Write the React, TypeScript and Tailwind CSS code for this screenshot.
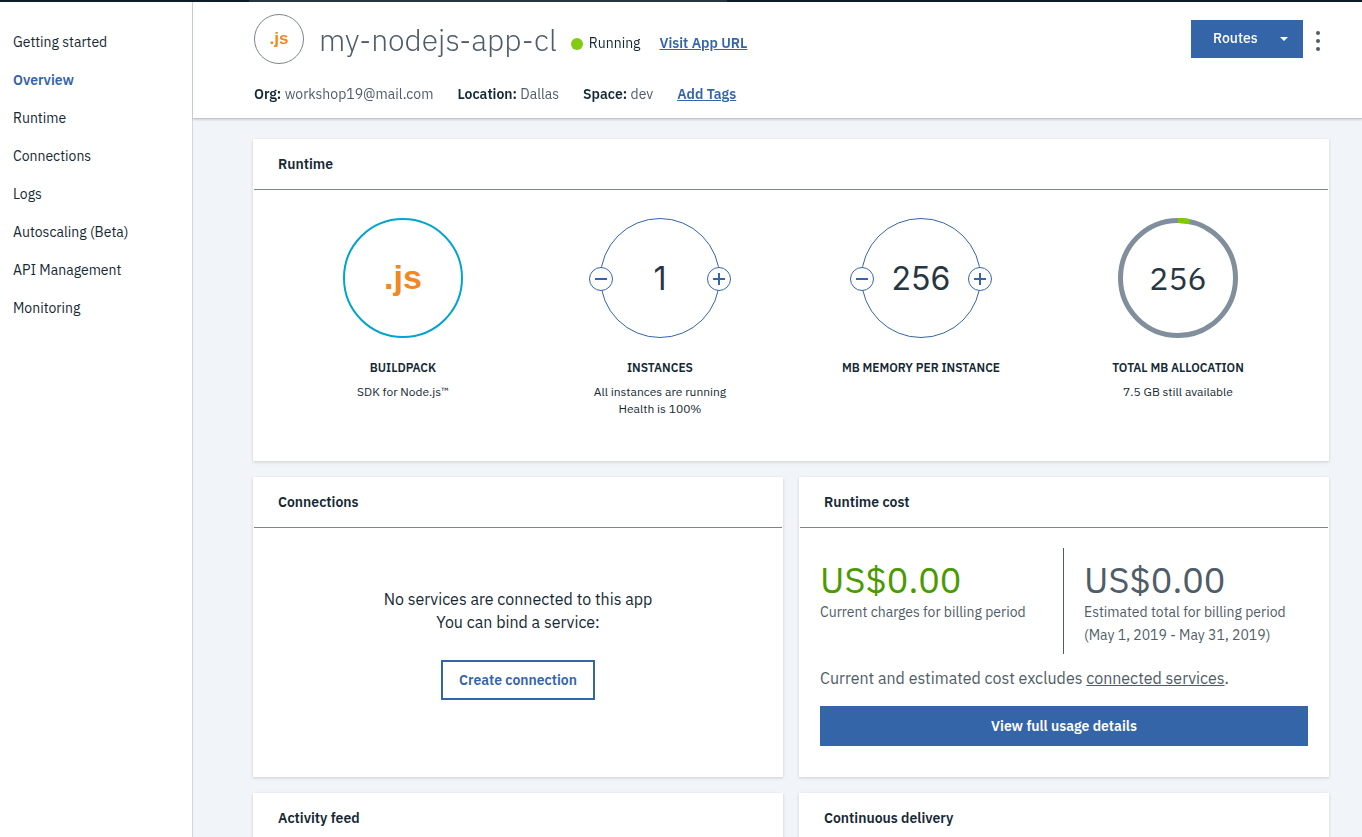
import type { ReactNode } from "react";

const navItems = [
  "Getting started",
  "Overview",
  "Runtime",
  "Connections",
  "Logs",
  "Autoscaling (Beta)",
  "API Management",
  "Monitoring",
];

function Card({ title, className = "", children }: { title: string; className?: string; children?: ReactNode }) {
  return (
    <section className={`flex flex-col bg-white shadow-[0_1px_3px_rgba(0,0,0,0.16)] ${className}`}>
      <h2 className="mx-px border-b border-[#79868f] pl-6 text-sm leading-[50px] font-semibold">{title}</h2>
      {children}
    </section>
  );
}

function Metric({ label, lines = [], children }: { label: string; lines?: string[]; children: ReactNode }) {
  return (
    <div className="flex flex-col items-center text-center text-xs">
      {children}
      <h3 className="mt-[22px] leading-4 font-semibold">{label}</h3>
      <div className="mt-[7px] leading-[17px]">
        {lines.map((line) => (
          <p key={line}>{line}</p>
        ))}
      </div>
    </div>
  );
}

function StepButton({ kind, label }: { kind: "minus" | "plus"; label: string }) {
  return (
    <button
      type="button"
      aria-label={label}
      className="flex size-6 items-center justify-center rounded-full border border-[#3465a9] bg-white text-[#3465a9]"
    >
      <svg viewBox="0 0 12 12" className="size-3" fill="currentColor" aria-hidden="true">
        <rect x="0" y="5" width="12" height="2" />
        {kind === "plus" && <rect x="5" y="0" width="2" height="12" />}
      </svg>
    </button>
  );
}

function Stepper({ value, name }: { value: number; name: string }) {
  return (
    <div className="flex h-[120px] items-center">
      <div className="relative z-10 -mr-[13px] pt-0.5">
        <StepButton kind="minus" label={`Decrease ${name}`} />
      </div>
      <div className="flex size-[120px] items-center justify-center rounded-full border border-[#3465a9] pt-0.5 font-['Inter',sans-serif] text-[32px] text-[#273640]">
        {value}
      </div>
      <div className="relative z-10 -ml-[13px] pt-0.5">
        <StepButton kind="plus" label={`Increase ${name}`} />
      </div>
    </div>
  );
}

export default function App() {
  return (
    <div className="flex h-screen flex-col overflow-hidden bg-white font-['IBM_Plex_Sans','Roboto',sans-serif] text-[#152935]">
      <div className="grid h-0.5 shrink-0 grid-cols-[249fr_478fr_635fr] bg-[#0f1c28]">
        <div className="col-start-2 bg-[#273541]" />
      </div>
      <div className="flex min-h-0 flex-1">
        <nav className="w-[193px] shrink-0 border-r border-[#d0d6da] pt-[21px]">
          <ul>
            {navItems.map((item) => (
              <li key={item}>
                <a
                  href="#"
                  className={`block pl-[13px] text-sm leading-[38px] ${item === "Overview" ? "font-semibold text-[#3465a9]" : ""}`}
                >
                  {item}
                </a>
              </li>
            ))}
          </ul>
        </nav>

        <div className="flex min-w-0 flex-1 flex-col">
          <header className="relative z-10 flex justify-between border-b border-[#c0c8cd] bg-white pt-3 pb-3.5 pl-[61px] shadow-[0_1px_2px_rgba(0,0,0,0.15)]">
            <div className="text-sm leading-5">
              <div className="flex h-[50px] items-center">
                <div className="flex size-[50px] items-center justify-center rounded-full border border-[#79868f] font-['Liberation_Sans',Arial,sans-serif] text-[17px] font-bold text-[#f18824]">
                  .js
                </div>
                <h1 className="mt-0.5 ml-[15px] text-[30px] leading-[50px] font-light text-[#4f5d68]">my-nodejs-app-cl</h1>
                <span className="mt-2.5 ml-3.5 size-3 rounded-full bg-[#81cb12]" />
                <span className="mt-2 ml-1.5">Running</span>
                <a href="#" className="mt-2 ml-[19px] font-semibold text-[#3465a9] underline">
                  Visit App URL
                </a>
              </div>
              <div className="mt-5 flex gap-6 text-[#4f5d68]">
                <p>
                  <b className="font-semibold text-[#152935]">Org:</b> workshop19@mail.com
                </p>
                <p>
                  <b className="font-semibold text-[#152935]">Location:</b> Dallas
                </p>
                <p>
                  <b className="font-semibold text-[#152935]">Space:</b> dev
                </p>
                <a href="#" className="font-semibold text-[#3465a9] underline">
                  Add Tags
                </a>
              </div>
            </div>
            <div className="mt-1.5 mr-[38px] flex h-[38px] items-center gap-[9px]">
              <button
                type="button"
                className="flex h-[38px] w-28 items-center justify-between bg-[#3465a9] pr-[15px] pb-0.5 pl-[22px] text-sm font-medium text-white"
              >
                Routes
                <svg viewBox="0 0 8 4" className="mt-0.5 h-1 w-2" fill="currentColor" aria-hidden="true">
                  <path d="M0 0h8L4 4z" />
                </svg>
              </button>
              <button type="button" aria-label="More actions" className="flex h-8 w-3 items-center justify-center">
                <svg viewBox="0 0 4 20" className="mt-1 h-5 w-1" fill="#4f5d68" aria-hidden="true">
                  <circle cx="2" cy="2" r="2" />
                  <circle cx="2" cy="10" r="2" />
                  <circle cx="2" cy="18" r="2" />
                </svg>
              </button>
            </div>
          </header>

          <main className="min-h-0 flex-1 overflow-y-auto bg-[#f1f4f9] pt-5 pr-[33px] pl-[60px] [scrollbar-width:none]">
            <div className="grid grid-cols-2 gap-4">
              <Card title="Runtime" className="col-span-2 min-h-[322px]">
                <div className="grid grid-cols-[256fr_258fr_264fr_250fr] pt-7 pr-[26px] pl-[22px]">
                  <Metric label="BUILDPACK" lines={["SDK for Node.js™"]}>
                    <div className="flex size-[120px] items-center justify-center rounded-full border-2 border-[#00a4cc] font-['Liberation_Sans',Arial,sans-serif] text-[34px] font-bold text-[#f18824]">
                      .js
                    </div>
                  </Metric>
                  <Metric label="INSTANCES" lines={["All instances are running", "Health is 100%"]}>
                    <Stepper value={1} name="instances" />
                  </Metric>
                  <Metric label="MB MEMORY PER INSTANCE">
                    <Stepper value={256} name="memory" />
                  </Metric>
                  <Metric label="TOTAL MB ALLOCATION" lines={["7.5 GB still available"]}>
                    <div className="grid size-[120px] place-items-center text-[32px] text-[#273640]">
                      <svg viewBox="0 0 120 120" className="col-start-1 row-start-1 size-[120px]" fill="none" strokeWidth="5" aria-hidden="true">
                        <circle cx="60" cy="60" r="57.5" stroke="#808f9b" />
                        <path d="M60 2.5A57.5 57.5 0 0 1 71.6 3.7" stroke="#7ccc00" />
                      </svg>
                      <span className="col-start-1 row-start-1">256</span>
                    </div>
                  </Metric>
                </div>
              </Card>

              <Card title="Connections" className="min-h-[300px]">
                <div className="flex flex-col items-center pt-[60px] text-center leading-[23px]">
                  <p>No services are connected to this app</p>
                  <p>You can bind a service:</p>
                  <button
                    type="button"
                    className="mt-[26px] h-10 border-2 border-[#3465a9] px-4 text-sm font-semibold text-[#3465a9]"
                  >
                    Create connection
                  </button>
                </div>
              </Card>

              <Card title="Runtime cost" className="min-h-[300px]">
                <div className="px-[21px] pt-5 text-[#4f5d68]">
                  <div className="grid grid-cols-[243fr_245fr] text-sm leading-[23px]">
                    <div className="pt-3">
                      <p className="pb-0.5 text-4xl leading-[39px] text-[#4b9b00]">US$0.00</p>
                      <p>Current charges for billing period</p>
                    </div>
                    <div className="h-[106px] border-l border-[#4f5d68] pt-3 pl-5">
                      <p className="pb-0.5 text-4xl leading-[39px]">US$0.00</p>
                      <p>Estimated total for billing period</p>
                      <p>(May 1, 2019 - May 31, 2019)</p>
                    </div>
                  </div>
                  <p className="mt-3 leading-6">
                    Current and estimated cost excludes{" "}
                    <a href="#" className="underline">
                      connected services
                    </a>
                    .
                  </p>
                  <button type="button" className="mt-4 h-10 w-full bg-[#3465a9] text-sm font-semibold text-white">
                    View full usage details
                  </button>
                </div>
              </Card>

              <Card title="Activity feed" className="min-h-[300px]" />
              <Card title="Continuous delivery" className="min-h-[300px]" />
            </div>
          </main>
        </div>
      </div>
    </div>
  );
}
